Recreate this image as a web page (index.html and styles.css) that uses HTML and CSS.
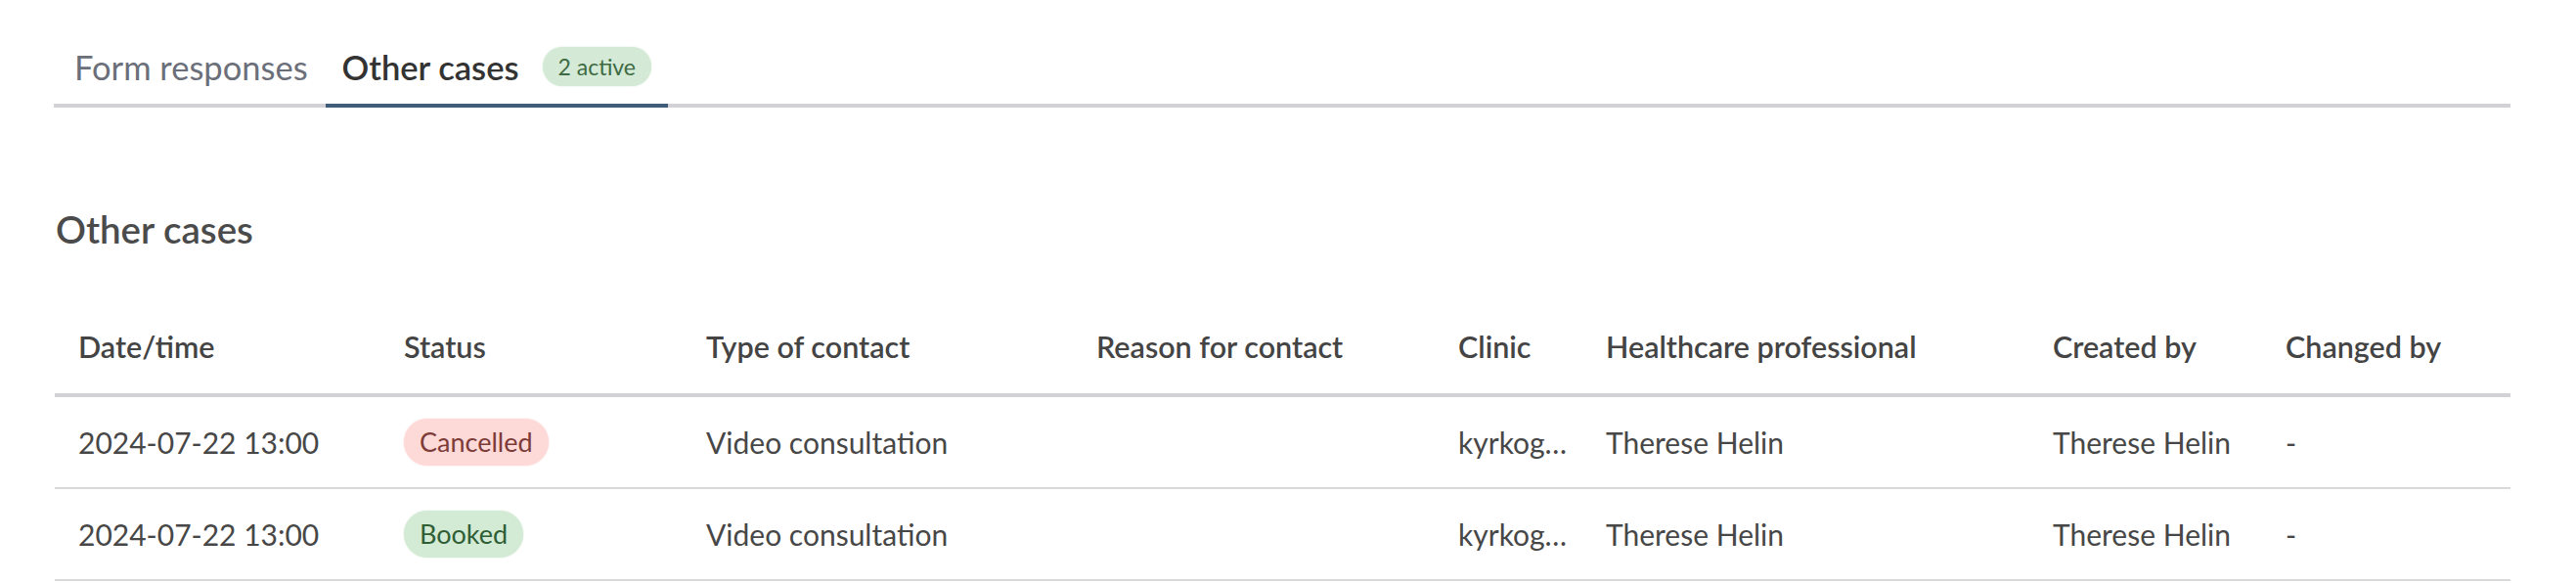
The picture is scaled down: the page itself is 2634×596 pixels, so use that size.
FILE: index.html
```html
<!DOCTYPE html>
<html lang="en">
<head>
    <meta charset="UTF-8">
    <meta name="viewport" content="width=device-width, initial-scale=1.0">
    <title>Other cases</title>
    <link rel="stylesheet" href="styles.css">
</head>
<body>

    <div class="tabs">
        <div class="tab">Form responses</div>
        <div class="tab active">Other cases <span class="count">2 active</span></div>
    </div>

    <h2 class="section-title">Other cases</h2>

    <table class="cases">
        <colgroup>
            <col class="c-date">
            <col class="c-status">
            <col class="c-type">
            <col class="c-reason">
            <col class="c-clinic">
            <col class="c-hcp">
            <col class="c-created">
            <col>
        </colgroup>
        <thead>
            <tr>
                <th>Date/time</th>
                <th>Status</th>
                <th>Type of contact</th>
                <th>Reason for contact</th>
                <th>Clinic</th>
                <th>Healthcare professional</th>
                <th>Created by</th>
                <th>Changed by</th>
            </tr>
        </thead>
        <tbody>
            <tr>
                <td>2024-07-22 13:00</td>
                <td><span class="pill cancelled">Cancelled</span></td>
                <td>Video consultation</td>
                <td></td>
                <td class="clinic">kyrkog…</td>
                <td>Therese Helin</td>
                <td>Therese Helin</td>
                <td>-</td>
            </tr>
            <tr>
                <td>2024-07-22 13:00</td>
                <td><span class="pill booked">Booked</span></td>
                <td>Video consultation</td>
                <td></td>
                <td class="clinic">kyrkog…</td>
                <td>Therese Helin</td>
                <td>Therese Helin</td>
                <td>-</td>
            </tr>
        </tbody>
    </table>

</body>
</html>
```

FILE: styles.css
```css
body {
    margin: 0;
    padding: 30px 67px 0 55px;
    font-family: Lato, "Open Sans", sans-serif;
    color: #474747;
    background: #fff;
}
.tabs {
    display: flex;
    border-bottom: 4px solid #d1d1d6;
}
.tab {
    display: flex;
    align-items: center;
    gap: 24px;
    height: 76px;
    padding: 0 18px 0 21px;
    margin-bottom: -4px;
    border-bottom: 4px solid transparent;
    font-size: 34.5px;
    color: #6b6f7a;
}
.tab.active {
    padding: 0 17px 0 17px;
    border-bottom-color: #3f5d78;
    color: #333;
    font-weight: 600;
}
.count {
    padding: 4px 16px;
    line-height: 32px;
    border-radius: 20px;
    background: #d4ead6;
    color: #3d6a42;
    font-size: 23px;
    font-weight: 400;
    box-shadow: 0 0 2px #d4ead6;
}
.section-title {
    margin: 100px 0 0 2px;
    font-size: 38.5px;
    line-height: 48px;
    font-weight: 600;
    color: #4b4b4b;
}
.cases {
    width: calc(100% - 1px);
    margin: 48px 0 0 1px;
    border-collapse: collapse;
    table-layout: fixed;
}
.c-date { width: 333px; }
.c-status { width: 309px; }
.c-type { width: 399px; }
.c-reason { width: 370px; }
.c-clinic { width: 151px; }
.c-hcp { width: 457px; }
.c-created { width: 238px; }
.cases th {
    height: 96px;
    padding: 0 24px;
    text-align: left;
    font-size: 30.5px;
    font-weight: 600;
    color: #444;
    border-bottom: 4px solid #d1d1d6;
    white-space: nowrap;
}
.cases td {
    height: 92px;
    padding: 0 24px;
    font-size: 30px;
    border-bottom: 2px solid #d9d9dc;
    white-space: nowrap;
}
.cases td.clinic {
    padding-right: 0;
}
.pill {
    display: inline-block;
    padding: 0 16px;
    line-height: 48px;
    border-radius: 24px;
    font-size: 27px;
}
.cancelled {
    background: #fdd9d7;
    color: #7d3b37;
    box-shadow: 0 0 2px #fdd9d7;
}
.booked {
    background: #d3ead5;
    color: #2f5e35;
    box-shadow: 0 0 2px #d3ead5;
}
```
